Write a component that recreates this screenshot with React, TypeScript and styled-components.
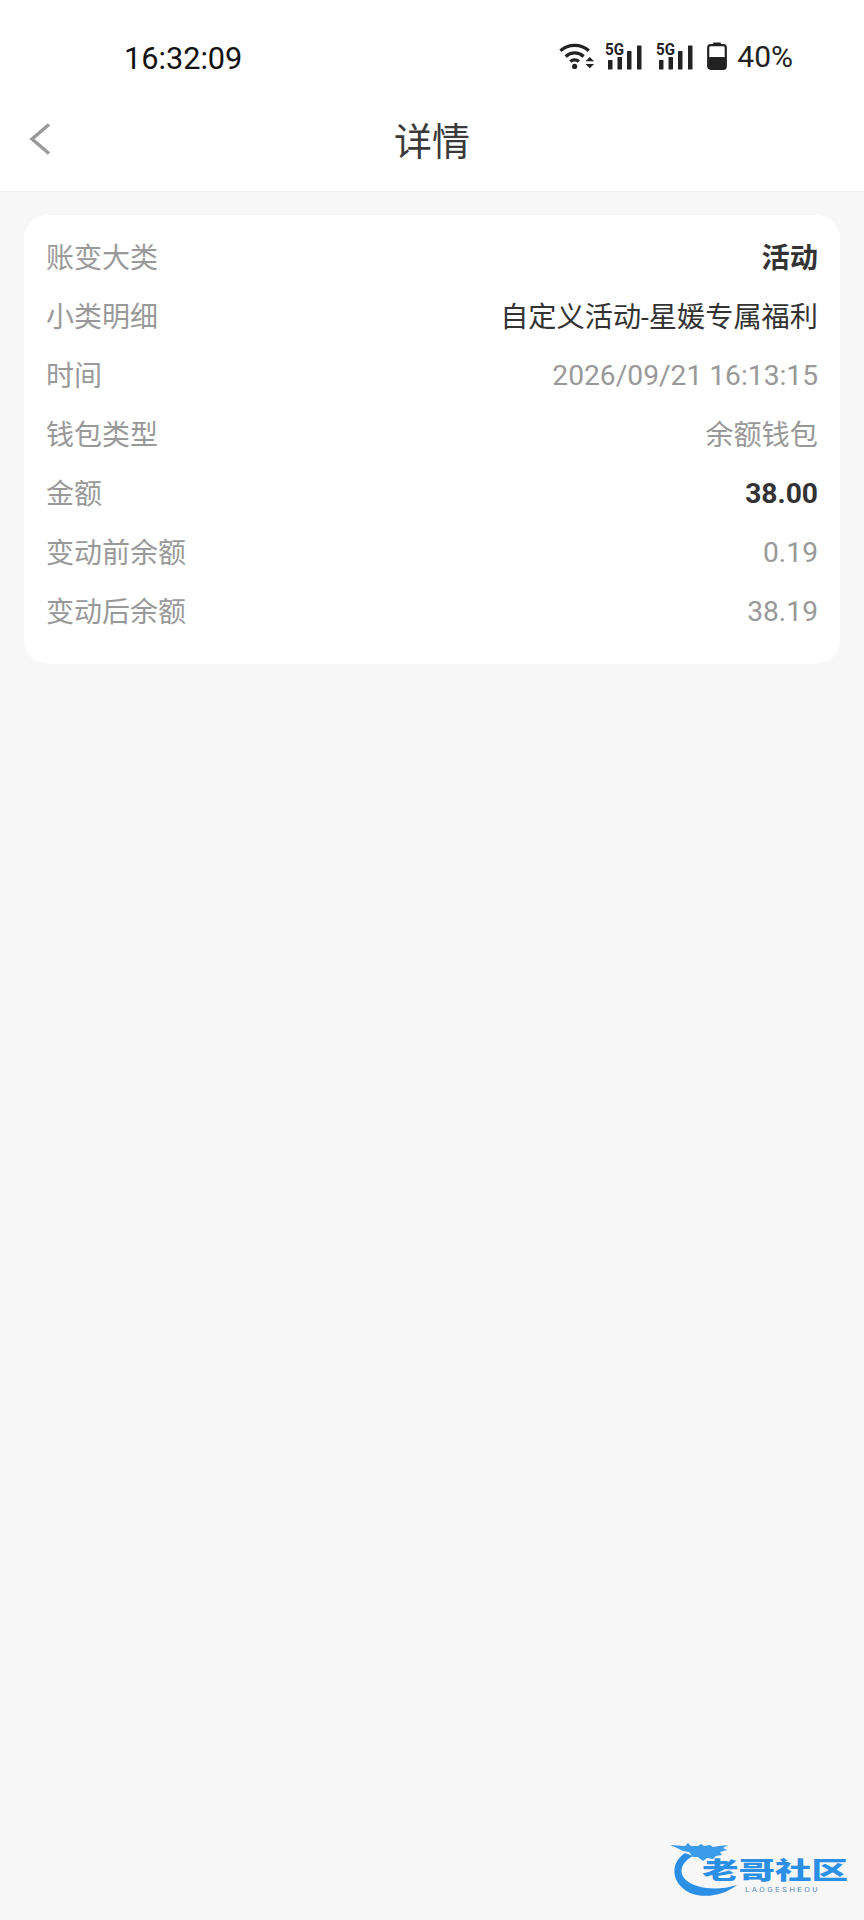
import styled, { createGlobalStyle } from 'styled-components';

const GlobalStyle = createGlobalStyle`
  html, body {
    margin: 0;
    padding: 0;
    background: #f7f7f7;
  }
`;

const Page = styled.div`
  position: relative;
  width: 864px;
  height: 1920px;
  overflow: hidden;
  background: #f7f7f7;
  font-family: Roboto, "Noto Sans CJK SC", sans-serif;
`;

const Top = styled.header`
  background: #fff;
  border-bottom: 1px solid #f0f0f0;
`;

const StatusBar = styled.div`
  height: 93px;
  padding: 23px 71px 0 124px;
  box-sizing: border-box;
  display: flex;
  justify-content: space-between;
  align-items: center;
`;

const Clock = styled.span`
  font-size: 30.7px;
  color: #111;
`;

const StatusIcons = styled.div`
  display: flex;
  align-items: center;
  gap: 10px;
  margin-top: -4px;
`;

const IconSvg = styled.svg`
  display: block;
  overflow: visible;
`;

const Battery = styled.span`
  font-size: 30px;
  color: #222;
`;

const NavBar = styled.nav`
  position: relative;
  height: 98px;
  display: flex;
  align-items: center;
  justify-content: center;
`;

const BackButton = styled.button`
  position: absolute;
  left: 28px;
  top: 28px;
  width: 24px;
  height: 36px;
  padding: 0;
  border: 0;
  background: none;
`;

const Title = styled.h1`
  margin: -8px 0 0;
  font-size: 38px;
  font-weight: 400;
  color: #3a3a3a;
`;

const Card = styled.section`
  margin: 23px 24px 0;
  padding: 11px 22px 25px 22px;
  background: #fff;
  border-radius: 24px;
`;

const Row = styled.div`
  height: 59px;
  display: flex;
  align-items: center;
  justify-content: space-between;
  font-size: 28.2px;
`;

const Label = styled.span`
  color: #999;
  font-size: 28px;
`;

const Value = styled.span<{ $tone?: 'muted' | 'dark'; $bold?: boolean; $numeric?: boolean }>`
  color: ${({ $tone }) => ($tone === 'dark' ? '#333' : '#999')};
  font-weight: ${({ $bold }) => ($bold ? 700 : 400)};
  padding-top: ${({ $numeric }) => ($numeric ? '3px' : '0')};
`;

const Watermark = styled.div`
  position: absolute;
  left: 668px;
  top: 1842px;
  width: 190px;
  height: 56px;
`;

const WatermarkName = styled.span`
  position: absolute;
  left: 34px;
  top: 9px;
  font-size: 36.5px;
  font-weight: 900;
  line-height: 40px;
  color: #2b8fe6;
  white-space: nowrap;
  transform: scaleY(0.66);
`;

const WatermarkSub = styled.span`
  position: absolute;
  left: 77px;
  top: 43px;
  font-size: 8px;
  line-height: 9px;
  letter-spacing: 2.4px;
  color: #5a8fc4;
  white-space: nowrap;
`;

const WifiIcon = () => (
  <IconSvg width="36" height="28" viewBox="0 0 38 28">
    <g fill="none" stroke="#222" strokeWidth="3.4">
      <path d="M1.5 8.5C10 1 23 1 31.5 8.5" />
      <path d="M7 14.5C12.5 9.5 20.5 9.5 26 14.5" />
      <path d="M12 20C14.5 17.5 18.5 17.5 21 20" />
    </g>
    <circle cx="16.5" cy="25" r="2.7" fill="#222" />
    <path d="M28 19.5h9l-4.5-4.5zM28 22.5h9l-4.5 4.5z" fill="#222" />
  </IconSvg>
);

const SignalIcon = () => (
  <IconSvg width="41" height="28" viewBox="0 0 41 28">
    <text x="0" y="13" fontFamily="Roboto, sans-serif" fontSize="17" fontWeight="700" fill="#222" textLength="19" lengthAdjust="spacingAndGlyphs">5G</text>
    <rect x="3" y="18" width="4.5" height="9.5" rx="0.5" fill="#222" />
    <rect x="12.5" y="15" width="4.5" height="12.5" rx="0.5" fill="#222" />
    <rect x="22" y="9" width="4.5" height="18.5" rx="0.5" fill="#222" />
    <rect x="32" y="3.5" width="4.5" height="24" rx="0.5" fill="#222" />
  </IconSvg>
);

const BatteryIcon = () => (
  <IconSvg width="20" height="28" viewBox="0 0 20 28">
    <rect x="6" y="0.5" width="8" height="3" rx="1" fill="#222" />
    <rect x="1.2" y="3.2" width="17.6" height="23.6" rx="2.5" fill="none" stroke="#222" strokeWidth="2.2" />
    <rect x="1.5" y="15" width="17" height="12" rx="1.5" fill="#222" />
  </IconSvg>
);

const details = [
  { label: '账变大类', value: '活动', tone: 'dark', bold: true },
  { label: '小类明细', value: '自定义活动-星媛专属福利', tone: 'dark' },
  { label: '时间', value: '2026/09/21 16:13:15', numeric: true },
  { label: '钱包类型', value: '余额钱包' },
  { label: '金额', value: '38.00', tone: 'dark', bold: true, numeric: true },
  { label: '变动前余额', value: '0.19', numeric: true },
  { label: '变动后余额', value: '38.19', numeric: true },
] as const;

export default function App() {
  return (
    <Page>
      <GlobalStyle />
      <Top>
        <StatusBar>
          <Clock>16:32:09</Clock>
          <StatusIcons>
            <WifiIcon />
            <SignalIcon />
            <SignalIcon />
            <BatteryIcon />
            <Battery>40%</Battery>
          </StatusIcons>
        </StatusBar>
        <NavBar>
          <BackButton aria-label="返回">
            <svg width="24" height="36" viewBox="0 0 24 36">
              <path d="M21 3.5L4 18l17 14.5" fill="none" stroke="#999" strokeWidth="3.4" />
            </svg>
          </BackButton>
          <Title>详情</Title>
        </NavBar>
      </Top>
      <Card>
        {details.map((d) => (
          <Row key={d.label}>
            <Label>{d.label}</Label>
            <Value
              $tone={'tone' in d ? d.tone : 'muted'}
              $bold={'bold' in d && d.bold}
              $numeric={'numeric' in d && d.numeric}
            >
              {d.value}
            </Value>
          </Row>
        ))}
      </Card>
      <Watermark>
        <svg width="100" height="56" viewBox="0 0 100 56">
          <path
            d="M17 11C3 20 1 40 22 51c16 6 34 2 47-8C50 49 30 47 19 39 10 32 12 21 25 14z"
            fill="#2b8fe6"
          />
          <path
            d="M2 3l15 1 3-3 3 3 7 0 3-2 3 2 6-1 3 2 6-1 9-1-5 3 4 2-7 2 2 3-6 1-3 3-6-1-4 3-5-4-5 0-4-5-6-1-6-3z"
            fill="#3c9cec"
          />
        </svg>
        <WatermarkName>老哥社区</WatermarkName>
        <WatermarkSub>LAOGESHEOU</WatermarkSub>
      </Watermark>
    </Page>
  );
}
